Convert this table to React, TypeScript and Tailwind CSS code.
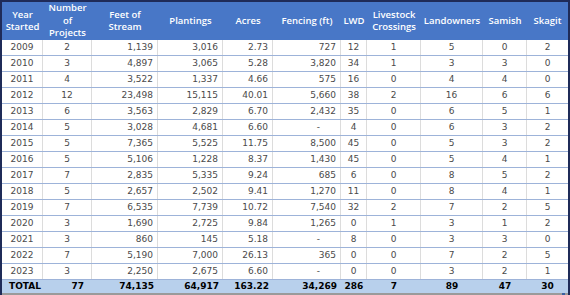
import React from "react";

const align = ["c", "c", "r", "r", "r", "r", "c", "c", "c", "c", "c"];

const headers: string[][] = [
  ["Year", "Started"],
  ["Number", "of", "Projects"],
  ["Feet of", "Stream"],
  ["Plantings"],
  ["Acres"],
  ["Fencing (ft)"],
  ["LWD"],
  ["Livestock", "Crossings"],
  ["Landowners"],
  ["Samish"],
  ["Skagit"],
];

const rows: string[][] = [
  ["2009", "2", "1,139", "3,016", "2.73", "727", "12", "1", "5", "0", "2"],
  ["2010", "3", "4,897", "3,065", "5.28", "3,820", "34", "1", "3", "3", "0"],
  ["2011", "4", "3,522", "1,337", "4.66", "575", "16", "0", "4", "4", "0"],
  ["2012", "12", "23,498", "15,115", "40.01", "5,660", "38", "2", "16", "6", "6"],
  ["2013", "6", "3,563", "2,829", "6.70", "2,432", "35", "0", "6", "5", "1"],
  ["2014", "5", "3,028", "4,681", "6.60", "-", "4", "0", "6", "3", "2"],
  ["2015", "5", "7,365", "5,525", "11.75", "8,500", "45", "0", "5", "3", "2"],
  ["2016", "5", "5,106", "1,228", "8.37", "1,430", "45", "0", "5", "4", "1"],
  ["2017", "7", "2,835", "5,335", "9.24", "685", "6", "0", "8", "5", "2"],
  ["2018", "5", "2,657", "2,502", "9.41", "1,270", "11", "0", "8", "4", "1"],
  ["2019", "7", "6,535", "7,739", "10.72", "7,540", "32", "2", "7", "2", "5"],
  ["2020", "3", "1,690", "2,725", "9.84", "1,265", "0", "1", "3", "1", "2"],
  ["2021", "3", "860", "145", "5.18", "-", "8", "0", "3", "3", "0"],
  ["2022", "7", "5,190", "7,000", "26.13", "365", "0", "0", "7", "2", "5"],
  ["2023", "3", "2,250", "2,675", "6.60", "-", "0", "0", "3", "2", "1"],
];

const total = ["TOTAL", "77", "74,135", "64,917", "163.22", "34,269", "286", "7", "89", "47", "30"];

const gridCols = "grid grid-cols-[41px_49px_66px_65px_50px_68px_26px_54px_62px_44px_41px]";

export default function App() {
  return (
    <div className="w-[570px] h-[295px] bg-[#1f2b58] pt-[2px] px-[2px] flex flex-col overflow-hidden">
      <div className="flex flex-col bg-white">
        {/* header */}
        <div
          className={`${gridCols} h-[38px] bg-[#4877c7] text-white font-semibold text-[9.5px] leading-[12.5px]`}
          style={{ fontFamily: '"Open Sans", "DejaVu Sans", sans-serif' }}
        >
          {headers.map((h, i) => (
            <div key={i} className="flex flex-col items-center justify-center text-center whitespace-nowrap">
              {h.map((l, j) => (
                <span key={j}>{l}</span>
              ))}
            </div>
          ))}
        </div>
        {/* rows */}
        {rows.map((r, ri) => (
          <div
            key={ri}
            className={`${gridCols} h-[16px] border-b border-[#9db3d9] text-[9px] text-[#4a4a4a]`}
            style={{ fontFamily: '"DejaVu Sans", Verdana, sans-serif' }}
          >
            {r.map((c, ci) => (
              <div
                key={ci}
                className={`flex items-center border-r border-[#dcdcdc] last:border-r-0 ${
                  align[ci] === "c" ? "justify-center" : "justify-end pr-[4px]"
                } ${c === "-" ? "pr-[20px]" : ""}`}
              >
                {c}
              </div>
            ))}
          </div>
        ))}
        {/* total */}
        <div
          className={`${gridCols} h-[13px] bg-[#b8d0ec] text-[9px] font-bold text-black`}
          style={{ fontFamily: '"DejaVu Sans", Verdana, sans-serif' }}
        >
          {total.map((c, ci) => (
            <div
              key={ci}
              className={`flex items-center ${
                ci === 0
                  ? "justify-start pl-[7px]"
                  : ci === 1
                  ? "justify-end pr-[8px]"
                  : align[ci] === "c"
                  ? "justify-center"
                  : "justify-end pr-[4px]"
              }`}
            >
              {c}
            </div>
          ))}
        </div>
      </div>
      <div className="flex-1 bg-[#9a9a9a] flex justify-end items-start">
        <div className="w-[3px] h-[2px] bg-[#3a5fa0] mr-[3px]" />
      </div>
    </div>
  );
}
